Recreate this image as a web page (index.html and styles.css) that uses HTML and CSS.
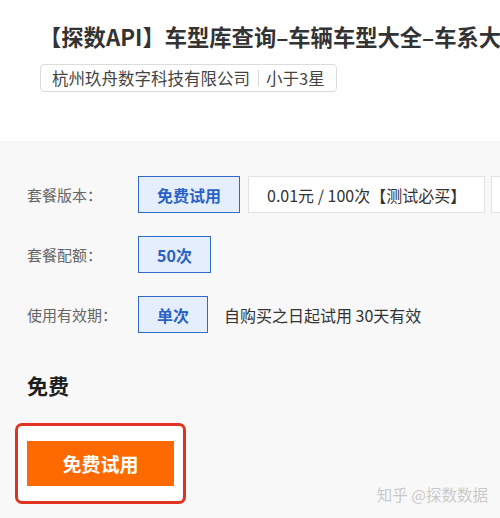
FILE: index.html
```html
<!DOCTYPE html>
<html lang="zh-CN">
<head>
<meta charset="utf-8">
<link rel="stylesheet" href="styles.css">
</head>
<body>
<div class="page">
  <header class="head">
    <h1 class="title">【探数API】车型库查询–车辆车型大全–车系大</h1>
    <div class="tag"><span>杭州玖舟数字科技有限公司</span><i class="sep"></i><span>小于3星</span></div>
  </header>
  <section class="panel">
    <div class="row">
      <div class="label">套餐版本：</div>
      <div class="opts">
        <span class="opt active">免费试用</span>
        <span class="opt">0.01元 / 100次【测试必买】</span>
        <span class="opt stub"></span>
      </div>
    </div>
    <div class="row">
      <div class="label">套餐配额：</div>
      <div class="opts"><span class="opt active">50次</span></div>
    </div>
    <div class="row">
      <div class="label">使用有效期：</div>
      <div class="opts"><span class="opt active">单次</span><span class="note">自购买之日起试用 30天有效</span></div>
    </div>
    <div class="price">免费</div>
    <div class="cta-frame"><button class="cta">免费试用</button></div>
    <div class="watermark">知乎 @探数数据</div>
  </section>
</div>
</body>
</html>
```

FILE: styles.css
```css
html, body {
  margin: 0;
  padding: 0;
  background: #f8f8f8;
}
body {
  width: 500px;
  height: 518px;
  overflow: hidden;
  font-family: "Noto Sans CJK SC", "Noto Sans", "Liberation Sans", sans-serif;
  color: #333;
}
.page {
  position: relative;
  height: 518px;
}
.head {
  background: #fff;
  padding: 21px 0 49px 39px;
}
.title {
  margin: 0;
  font-size: 22.3px;
  line-height: 30px;
  font-weight: 700;
  color: #333;
  white-space: nowrap;
}
.tag {
  display: inline-flex;
  align-items: center;
  margin-top: 13px;
  margin-left: 1px;
  height: 26px;
  padding: 0 11px 0 11px;
  border: 1px solid #dcdcdc;
  border-radius: 4px;
  font-size: 16.5px;
  color: #444;
  background: #fff;
}
.sep {
  display: inline-block;
  width: 1px;
  height: 16px;
  background: #d8d8d8;
  margin: 0 7px 0 8px;
}
.panel {
  position: relative;
  padding: 35px 0 0 27px;
  height: 342px;
}
.row {
  display: flex;
  align-items: center;
  margin-bottom: 23px;
}
.label {
  width: 111px;
  flex: none;
  font-size: 15px;
  color: #666;
  white-space: nowrap;
}
.opts {
  display: flex;
  align-items: center;
  gap: 8px;
  white-space: nowrap;
}
.opt {
  flex: none;
  display: inline-flex;
  align-items: center;
  height: 35px;
  padding: 0 18px;
  border: 1.5px solid #e2e2e2;
  background: #fff;
  font-size: 16px;
  color: #333;
}
.opt.stub {
  width: 40px;
  padding: 0;
  margin-left: -2px;
}
.opt.active {
  border-color: #2e6cc8;
  background: #e5eefc;
  color: #2a62c4;
  font-weight: 700;
}
.note {
  margin-left: 8px;
  font-size: 16px;
  color: #333;
}
.price {
  margin-top: 38px;
  font-size: 21px;
  line-height: 28px;
  font-weight: 700;
  color: #1e1e1e;
}
.cta-frame {
  margin: 24px 0 0 -12px;
  display: inline-block;
  padding: 15px 9px;
  border: 3px solid #e1311f;
  border-radius: 7px;
  background: #fff;
}
.cta {
  display: block;
  width: 147px;
  height: 45px;
  border: 0;
  background: #ff6a00;
  color: #fff;
  font-family: inherit;
  font-size: 19px;
  font-weight: 700;
  padding: 0;
}
.watermark {
  position: absolute;
  right: 12px;
  bottom: 13px;
  font-size: 15.5px;
  color: #c9c9c9;
  text-shadow: 0 0 1px #fff;
}
```
